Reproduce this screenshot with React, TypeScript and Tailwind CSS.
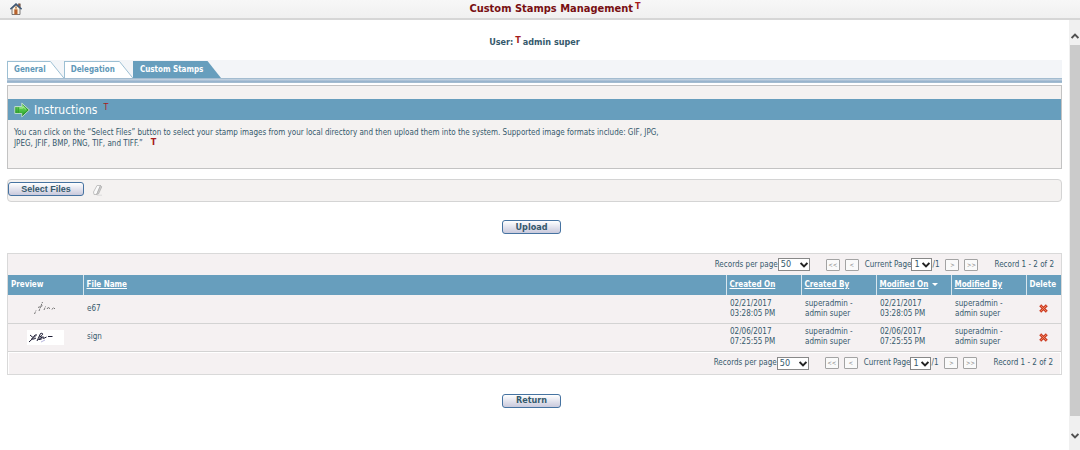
import { ReactNode } from "react";

const tabs = [
  { name: "General", active: false },
  { name: "Delegation", active: false },
  { name: "Custom Stamps", active: true },
];

const stamps = [
  {
    name: "e67",
    preview: "faint",
    createdOn: ["02/21/2017", "03:28:05 PM"],
    modifiedOn: ["02/21/2017", "03:28:05 PM"],
  },
  {
    name: "sign",
    preview: "dark",
    createdOn: ["02/06/2017", "07:25:55 PM"],
    modifiedOn: ["02/06/2017", "07:25:55 PM"],
  },
];

function HomeIcon() {
  return (
    <svg width="12" height="12" viewBox="0 0 12 12" aria-hidden="true">
      <path d="M2 5.5 6 2l4 3.5v6H2z" fill="#f8f1e4" stroke="#5d5a5a" strokeWidth="0.8" />
      <path d="M8.300.8h2v3.500l-2-2z" fill="#a05a3c" stroke="#56504d" strokeWidth="0.5" />
      <path d="M.4 6.200 6 1l5.600 5.200" fill="none" stroke="#3f5875" strokeWidth="1.500" />
      <path d="M4.300 6.300h3.200v5.200H4.300z" fill="#b8622c" />
      <path d="M5 5.800h2" stroke="#d99a5e" strokeWidth="1" />
      <circle cx="6" cy="4.200" r="0.900" fill="#ad7a4e" />
    </svg>
  );
}

function ArrowIcon() {
  return (
    <svg width="16" height="16" viewBox="0 0 16 16" aria-hidden="true">
      <defs>
        <linearGradient id="arrow" x1="0" y1="0" x2="0" y2="1">
          <stop offset="0" stopColor="#9be886" />
          <stop offset="0.5" stopColor="#4fc445" />
          <stop offset="1" stopColor="#1f8f24" />
        </linearGradient>
      </defs>
      <path d="M.8 4.500h7V1l7.600 7-7.600 7v-3.500h-7z" fill="url(#arrow)" stroke="#c3dfcf" strokeWidth="0.900" />
      <path d="M2 5.200v5.600M4.200 5.200v5.600" stroke="#227f27" strokeWidth="0.700" />
      <path d="M8.400 2.800 14 8l-5.600 5.200" fill="none" stroke="#24842a" strokeWidth="0.700" />
      <path d="M5.500 6h3.500V4.500l2.800 2.700" fill="none" stroke="#b4f29e" strokeWidth="0.900" />
    </svg>
  );
}

function EraserIcon() {
  return (
    <svg width="12" height="12" viewBox="0 0 12 12" aria-hidden="true">
      <path d="M1.500 8 5 1.500h3.500L5.500 8.500 4.500 10.500H2z" fill="#fafafa" stroke="#bcbcbc" strokeWidth="0.900" />
      <path d="M5.500 8.500 8.500 1.500l1.300 1.300-3.200 7-2 .8z" fill="#cfcfcf" stroke="#a3a3a3" strokeWidth="0.600" />
      <path d="M5 11.200h5" stroke="#d6d6d6" strokeWidth="0.800" />
    </svg>
  );
}

function DeleteIcon() {
  return (
    <svg width="9" height="9" viewBox="0 0 9 9" aria-hidden="true">
      <path d="m1.200 1.200 6.600 6.600M7.800 1.200 1.200 7.800" stroke="#c93a24" strokeWidth="2.800" />
      <path d="m1.500 1.500 6 6M7.500 1.500l-6 6" stroke="#f58a5c" strokeWidth="0.900" />
    </svg>
  );
}

function Signature({ kind }: { kind: string }) {
  if (kind === "faint") {
    return (
      <svg className="mx-auto" width="37" height="15" viewBox="0 0 37 15" aria-hidden="true">
        <path d="M7.500 13 9 9.500M12 10l3.500-9M11 6.500l5-2M17 9l1.500-3.500M20 8l1.500-2 1.500 2.500M25 8.500l1.500-2 1.500 1.500" fill="none" stroke="#666" strokeWidth="0.900" strokeDasharray="2 0.800" />
      </svg>
    );
  }
  return (
    <svg className="mx-auto bg-white" width="37" height="15" viewBox="0 0 37 15" aria-hidden="true">
      <path d="m3 5 3 2.500 2.500-3M2 12l8-7.500M4 9h3l2-1" fill="none" stroke="#1d1d35" strokeWidth="1" />
      <path d="m10 11 3.500-7.500c3-1 3 1.500-1 3.500 4-1 3.500 3-1 2.500l4-2.500c2-1 0 2 1 1.500l3-1.500M21 6.500h4.500" fill="none" stroke="#1d1d35" strokeWidth="1" />
      <path d="M14 12l4-2" stroke="#9a96d0" strokeWidth="0.700" />
    </svg>
  );
}

function Chevron({ className, up }: { className?: string; up?: boolean }) {
  return (
    <svg className={className} width="8" height="6" viewBox="0 0 8 6" aria-hidden="true">
      <path d={up ? "m.6 5 3.400-3.500L7.400 5" : "m.6 1 3.400 3.500L7.400 1"} fill="none" stroke="currentColor" strokeWidth="1.900" />
    </svg>
  );
}

function Mark({ className = "font-bold" }: { className?: string }) {
  return <span className={`${className} text-[9px] leading-none text-[#a51c1c]`}>T</span>;
}

function FormButton({ children, className }: { children: ReactNode; className: string }) {
  return (
    <button
      type="button"
      className={`${className} h-3.5 rounded-[3px] border border-[#4673a1] bg-linear-to-b from-white to-[#c9c9dc] text-[9px] font-bold leading-none`}
    >
      {children}
    </button>
  );
}

function PageButton({ label, children }: { label: string; children: string }) {
  return (
    <button
      type="button"
      aria-label={label}
      className="flex h-3 w-3.5 items-center justify-center rounded-[1px] border border-[#a3a3a3] bg-[#fafafa] text-[6px] leading-none text-[#777]"
    >
      {children}
    </button>
  );
}

function Pager({ id }: { id: string }) {
  return (
    <div className="flex items-center justify-end py-1 pr-[7px] leading-3">
      <label htmlFor={`${id}-size`}>Records per page</label>
      <span className="relative flex">
        <select id={`${id}-size`} className="h-[13px] w-8 appearance-none border border-[#888] bg-white pl-0.5 text-[9px] leading-none">
          <option>50</option>
        </select>
        <Chevron className="pointer-events-none absolute right-0.5 top-1 text-[#222]" />
      </span>
      <div className="ml-4 flex gap-[5px]">
        <PageButton label="First page">&lt;&lt;</PageButton>
        <PageButton label="Previous page">&lt;</PageButton>
      </div>
      <label htmlFor={`${id}-page`} className="ml-1.5">Current Page</label>
      <span className="relative flex">
        <select id={`${id}-page`} className="h-[13px] w-[21px] appearance-none border border-[#888] bg-white pl-0.5 text-[9px] leading-none">
          <option>1</option>
        </select>
        <Chevron className="pointer-events-none absolute right-0.5 top-1 text-[#222]" />
      </span>
      <span>/1</span>
      <div className="ml-1.5 flex gap-[5px]">
        <PageButton label="Next page">&gt;</PageButton>
        <PageButton label="Last page">&gt;&gt;</PageButton>
      </div>
      <span className="ml-4">Record 1 - 2 of 2</span>
    </div>
  );
}

function Tab({ name, active }: { name: string; active: boolean }) {
  return (
    <button type="button" role="tab" aria-selected={active} className="flex">
      <span
        className={`h-[17px] border-l border-t pl-1.5 pr-1 font-bold leading-4 ${
          active ? "border-[#679ebd] bg-[#679ebd] text-white" : "border-[#9cbfd3] bg-white text-[#5f98b8]"
        }`}
      >
        {name}
      </span>
      <svg width="14" height="17" viewBox="0 0 14 17" aria-hidden="true">
        <path d="M0 0h.5L14 17H0z" fill={active ? "#679ebd" : "#fff"} />
        {!active && <path d="M0 .5h.5L13.800 17" fill="none" stroke="#9cbfd3" />}
      </svg>
    </button>
  );
}

export default function App() {
  return (
    <div className="flex min-h-screen flex-col bg-white font-['DejaVu_Sans_Condensed','DejaVu_Sans',sans-serif] text-[8px] leading-[10px] text-[#35596c]">
      <header className="flex h-5 items-center border-b-2 border-[#d6d6d6] bg-linear-to-b from-[#f7f7f7] to-[#f0f0f0] pl-2.5">
        <a href="#home" aria-label="Home" className="mr-2">
          <HomeIcon />
        </a>
        <h1 className="flex flex-1 justify-center gap-0.5 text-[11px] font-bold leading-[14px] text-[#780f12]">
          Custom Stamps Management <Mark />
        </h1>
      </header>

      <div className="flex flex-1">
        <main className="flex-1 px-[7px] pt-4">
          <p className="flex justify-center gap-0.5 text-[9px] font-bold leading-3">
            User: <Mark /> admin super
          </p>

          <div role="tablist" className="mt-3 flex h-[18px] bg-[#f3f5f8] pt-px">
            {tabs.map((tab) => (
              <Tab key={tab.name} {...tab} />
            ))}
          </div>
          <div className="h-[5px] border-y border-[#a3bcd0] bg-linear-to-b from-[#c9d6e3] to-[#8fadc8]" />

          <section className="mt-0.5 h-[84px] border border-[#c3c3c3] bg-[#f4f2f1] pt-[13px]">
            <h2 className="flex h-[21px] items-center bg-[#679ebd] pl-1.5 text-[12px] text-white">
              <ArrowIcon />
              <span className="ml-1 mr-1.5">Instructions</span>
              <Mark className="-mt-1" />
            </h2>
            <p className="max-w-[660px] px-1.5 pt-[7px] leading-[11px]">
              You can click on the “Select Files” button to select your stamp images from your local directory and then
              upload them into the system. Supported image formats include: GIF, JPG, JPEG, JFIF, BMP, PNG, TIF, and
              TIFF.”
              <Mark className="ml-2 inline-block align-top font-bold" />
            </p>
          </section>

          <div className="mt-2.5 flex h-[23px] items-start gap-2 rounded border border-[#d4d4d4] bg-[#f4f2f1] pt-0.5">
            <FormButton className="w-[76px] font-['Liberation_Sans',sans-serif]">Select Files</FormButton>
            <button type="button" aria-label="Clear files" className="pt-0.5">
              <EraserIcon />
            </button>
          </div>

          <div className="mt-[18px] flex justify-center pr-1.5">
            <FormButton className="w-[59px]">Upload</FormButton>
          </div>

          <div className="mt-[19px] border border-[#d9d9d9] bg-[#f5f1f2]">
            <Pager id="top" />
            <table className="w-full table-fixed border-collapse text-left">
              <thead>
                <tr className="h-5 bg-[#679ebd] text-white *:px-[3px] *:not-first:border-l *:not-first:border-[#d7e6ee]">
                  <th className="w-[75px]">Preview</th>
                  <th><a href="#name" className="underline">File Name</a></th>
                  <th className="w-[75px]"><a href="#created-on" className="underline">Created On</a></th>
                  <th className="w-[75px]"><a href="#created-by" className="underline">Created By</a></th>
                  <th className="w-[75px] whitespace-nowrap">
                    <a href="#modified-on" className="underline">Modified On</a>
                    <svg className="ml-1 inline" width="6" height="3" viewBox="0 0 6 3" aria-hidden="true">
                      <path d="M0 0h6L3 3z" fill="#fff" />
                    </svg>
                  </th>
                  <th className="w-[75px]"><a href="#modified-by" className="underline">Modified By</a></th>
                  <th className="w-[35px]">Delete</th>
                </tr>
              </thead>
              <tbody>
                {stamps.map((stamp) => (
                  <tr key={stamp.name} className="h-7 border-b border-[#d3d3d3] *:px-1">
                    <td><Signature kind={stamp.preview} /></td>
                    <td>{stamp.name}</td>
                    <td>{stamp.createdOn[0]}<br />{stamp.createdOn[1]}</td>
                    <td>superadmin -<br />admin super</td>
                    <td>{stamp.modifiedOn[0]}<br />{stamp.modifiedOn[1]}</td>
                    <td>superadmin -<br />admin super</td>
                    <td>
                      <button type="button" aria-label={`Delete ${stamp.name}`} className="mx-auto block">
                        <DeleteIcon />
                      </button>
                    </td>
                  </tr>
                ))}
              </tbody>
            </table>
            <div className="border-x border-t border-white">
              <Pager id="bottom" />
            </div>
          </div>

          <div className="mt-[19px] flex justify-center pr-1.5">
            <FormButton className="w-[59px]">Return</FormButton>
          </div>
        </main>

        <div className="flex w-[11px] flex-col items-center bg-[#f0f0f0] text-[#505050]">
          <div className="flex h-[25px] items-end pb-1.5">
            <Chevron up />
          </div>
          <div className="w-2.5 flex-1 bg-[#cbcbcb]" />
          <div className="flex h-[34px] items-center pt-1.5">
            <Chevron />
          </div>
        </div>
      </div>
    </div>
  );
}
